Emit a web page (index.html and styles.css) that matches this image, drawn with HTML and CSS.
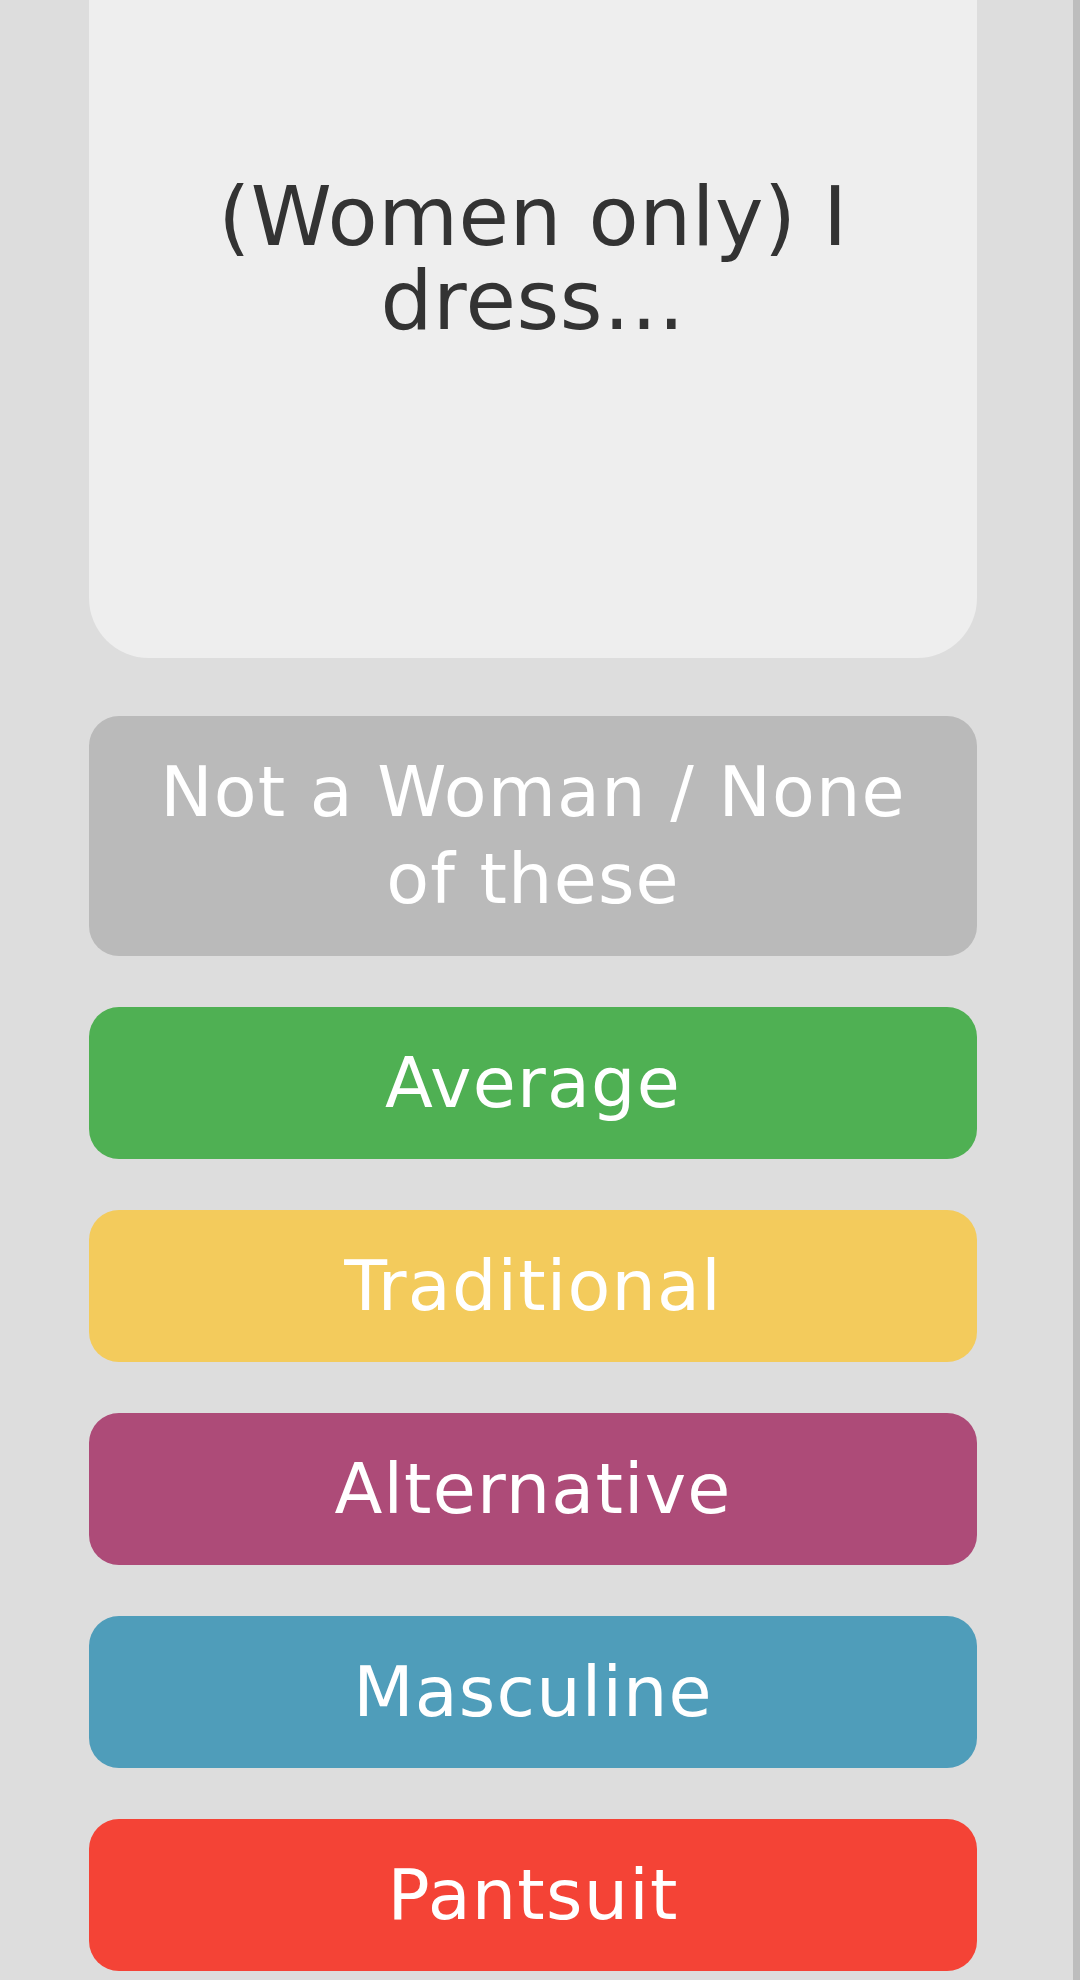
FILE: index.html
```html
<!DOCTYPE html>
<html lang="en">
<head>
<meta charset="utf-8">
<title>Quiz</title>
<link rel="stylesheet" href="styles.css">
</head>
<body>
<div class="page">
  <main class="main">
    <section class="question-card">
      <h1 class="question">(Women only) I dress…</h1>
    </section>
    <div class="options">
      <button class="option option-none">Not a Woman / None of these</button>
      <button class="option option-green">Average</button>
      <button class="option option-yellow">Traditional</button>
      <button class="option option-purple">Alternative</button>
      <button class="option option-blue">Masculine</button>
      <button class="option option-red">Pantsuit</button>
    </div>
  </main>
  <div class="scrollbar"></div>
</div>
</body>
</html>
```
FILE: styles.css
```css
html, body {
  margin: 0;
  padding: 0;
  height: 100%;
}
body {
  background: #dddddd;
  font-family: "DejaVu Sans", "Liberation Sans", sans-serif;
  overflow: hidden;
}
.page {
  display: flex;
  min-height: 1980px;
}
.main {
  flex: 1;
  padding: 0 96px 0 89px;
  display: flex;
  flex-direction: column;
}
.scrollbar {
  width: 7px;
  background: #bdbdbd;
}
.question-card {
  background: #eeeeee;
  height: 658px;
  box-sizing: border-box;
  border-radius: 0 0 60px 60px;
  padding: 175px 60px 0;
}
.question {
  margin: 0;
  font-weight: normal;
  font-size: 82px;
  line-height: 84px;
  color: #333333;
  text-align: center;
  letter-spacing: 0.5px;
}
.options {
  display: flex;
  flex-direction: column;
  gap: 51px;
  margin-top: 58px;
}
.option {
  border: none;
  border-radius: 30px;
  padding: 33px 50px;
  font-family: inherit;
  font-size: 70px;
  line-height: 86px;
  letter-spacing: 1.2px;
  color: #ffffff;
  text-align: center;
  width: 100%;
}
.option-none { background: #bababa; line-height: 87px; }
.option-green { background: #4fb053; }
.option-yellow { background: #f3cb5c; }
.option-purple { background: #ad4b78; }
.option-blue { background: #4f9dba; }
.option-red { background: #f44336; }
```
